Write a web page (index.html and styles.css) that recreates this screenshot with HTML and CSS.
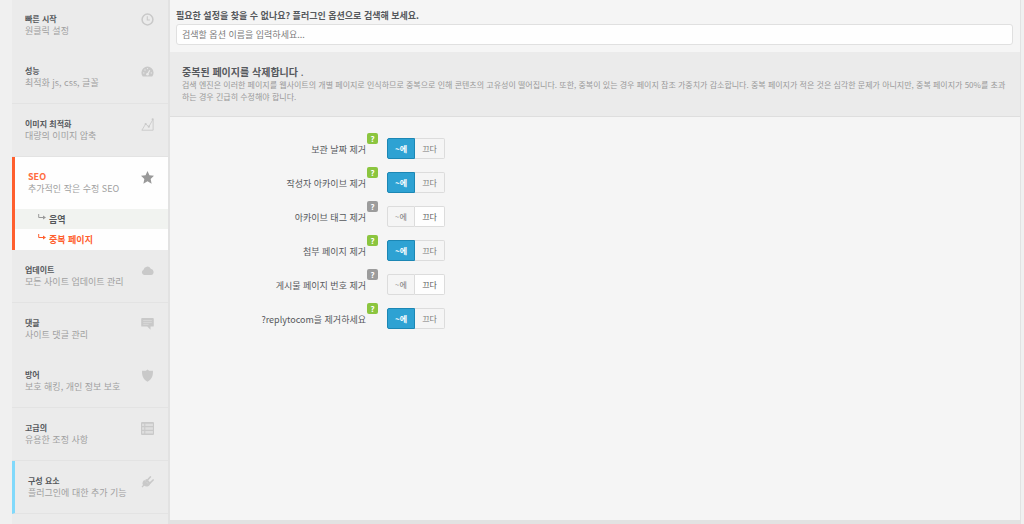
FILE: index.html
```html
<!DOCTYPE html>
<html lang="ko">
<head>
  <meta charset="UTF-8">
  <meta name="viewport" content="width=device-width, initial-scale=1.0">
  <title>중복 페이지</title>
  <link rel="stylesheet" href="styles.css">
</head>
<body>
  <div class="wrapper">
    <!-- Menu -->
    <nav class="sidebar">
      <a href="#" class="menu-item first">
        <span class="menu-text"><strong>빠른 시작</strong><span>원클릭 설정</span></span>
        <svg class="icon" viewBox="0 0 12 12"><circle cx="6" cy="6" r="5" fill="none" stroke="currentColor" stroke-width="1.4"/><path d="M5.8 3v3.4h2.4" fill="none" stroke="currentColor"/></svg>
      </a>
      <a href="#" class="menu-item line">
        <span class="menu-text"><strong>성능</strong><span>최적화 js, css, 글꼴</span></span>
        <svg class="icon" viewBox="0 0 12 12"><path d="M1.6 10.5A5.6 5.6 0 1 1 10.4 10.5Z" fill="currentColor"/><path d="M6 8.6 8.1 4.8" stroke="#ebebeb" stroke-width="1.1"/><circle cx="6" cy="8.6" r="1.2" fill="#ebebeb"/><circle cx="2.6" cy="7.3" r=".6" fill="#ebebeb"/><circle cx="3.7" cy="4.6" r=".6" fill="#ebebeb"/><circle cx="6" cy="3.3" r=".6" fill="#ebebeb"/><circle cx="9.5" cy="7.3" r=".6" fill="#ebebeb"/></svg>
      </a>
      <a href="#" class="menu-item line">
        <span class="menu-text"><strong>이미지 최적화</strong><span>대량의 이미지 압축</span></span>
        <svg class="icon" viewBox="0 0 12 12"><path d="M.8 11.3h10.4V2M.8 11.3 4.3 5.5l2.9 2.6 3.4-6" fill="none" stroke="currentColor" stroke-width=".8"/><circle cx="4.3" cy="5.5" r="1" fill="currentColor"/><circle cx="7.2" cy="8" r="1" fill="currentColor"/><circle cx="10.8" cy="1.3" r="1" fill="currentColor"/></svg>
      </a>

      <div class="menu-active">
        <a href="#" class="menu-item">
          <span class="menu-text"><strong>SEO</strong><span>추가적인 작은 수정 SEO</span></span>
          <svg class="icon" viewBox="0 0 12 12"><path d="M6 0 7.8 4l4.2.4-3.1 2.9.9 4.5L6 9.5l-3.8 2.3.9-4.5L0 4.4 4.2 4Z" fill="currentColor"/></svg>
        </a>
        <a href="#" class="sub-item">
          <svg class="arrow" viewBox="0 0 8 6"><path d="M.7 0v3.5h5" fill="none" stroke="currentColor"/><path d="M5 1.5 8 3.5 5 5.5Z" fill="currentColor"/></svg>
          음역
        </a>
        <a href="#" class="sub-item current">
          <svg class="arrow" viewBox="0 0 8 6"><path d="M.7 0v3.5h5" fill="none" stroke="currentColor"/><path d="M5 1.5 8 3.5 5 5.5Z" fill="currentColor"/></svg>
          중복 페이지
        </a>
      </div>

      <a href="#" class="menu-item line">
        <span class="menu-text"><strong>업데이트</strong><span>모든 사이트 업데이트 관리</span></span>
        <svg class="icon" viewBox="0 0 12 12"><path d="M2.8 10.2A2.6 2.6 0 0 1 2.3 5.3 3.6 3.6 0 0 1 9 4.3 3 3 0 0 1 9.3 10.2Z" fill="currentColor"/></svg>
      </a>
      <a href="#" class="menu-item">
        <span class="menu-text"><strong>댓글</strong><span>사이트 댓글 관리</span></span>
        <svg class="icon" viewBox="0 0 12 12"><path d="M1 1h10q.8 0 .8.8v6.2q0 .8-.8.8H8.8v3L5.8 8.8H1q-.8 0-.8-.8V1.8Q.2 1 1 1Z" fill="currentColor"/><path d="M2 3.2h8M2 5h8M2 6.8h5" stroke="#ebebeb" stroke-width=".4"/></svg>
      </a>
      <a href="#" class="menu-item line">
        <span class="menu-text"><strong>방어</strong><span>보호 해킹, 개인 정보 보호</span></span>
        <svg class="icon" viewBox="0 0 12 12"><path d="M6 .5 7.5 1.5H11C11.3 6 10 9.6 6 11.7 2 9.6.7 6 1 1.5H4.5Z" fill="currentColor"/></svg>
      </a>
      <a href="#" class="menu-item line">
        <span class="menu-text"><strong>고급의</strong><span>유용한 조정 사항</span></span>
        <svg class="icon" viewBox="0 0 12 12"><rect width="12" height="12" rx="1" fill="currentColor"/><path d="M1 2.600h2M1 6h2M1 9.400h2M4 2.600h7M4 6h7M4 9.400h7" stroke="#dedede" stroke-width="2.200"/></svg>
      </a>
      <a href="#" class="menu-item line components">
        <span class="menu-text"><strong>구성 요소</strong><span>플러그인에 대한 추가 기능</span></span>
        <svg class="icon" viewBox="0 0 12 12"><path d="M3 4.5 8 9.3C6.5 11 4.4 11 3 10L1.3 11.6.5 10.8 1.8 9.3C.9 7.6 1.5 5.7 3 4.5Z" fill="currentColor"/><path d="M5 5.8 8.6 1.8M7.5 8.2 11.2 4.6" stroke="currentColor" stroke-width="1.5" stroke-linecap="round"/><path d="M3.5 4.5 5.5 3.8 9 7.3 8 9.3Z" fill="currentColor"/></svg>
      </a>
    </nav>

    <!-- Options -->
    <main class="content">
      <div class="search">
        <label for="search-options">필요한 설정을 찾을 수 없나요? 플러그인 옵션으로 검색해 보세요.</label>
        <input type="text" id="search-options" placeholder="검색할 옵션 이름을 입력하세요...">
      </div>

      <header class="page-header">
        <h1>중복된 페이지를 삭제합니다 <span>.</span></h1>
        <p>검색 엔진은 이러한 페이지를 웹사이트의 개별 페이지로 인식하므로 중복으로 인해 콘텐츠의 고유성이 떨어집니다. 또한, 중복이 있는 경우 페이지 참조 가중치가 감소합니다. 중복 페이지가 적은 것은 심각한 문제가 아니지만, 중복 페이지가 50%를 초과하는 경우 긴급히 수정해야 합니다.</p>
      </header>

      <form class="options">
        <div class="option">
          <span class="option-label" id="opt-date">보관 날짜 제거</span>
          <button type="button" class="help green">?</button>
          <div class="switch" role="group" aria-labelledby="opt-date">
            <button type="button" class="on active">~에</button><button type="button" class="off">끄다</button>
          </div>
        </div>
        <div class="option">
          <span class="option-label" id="opt-author">작성자 아카이브 제거</span>
          <button type="button" class="help green">?</button>
          <div class="switch" role="group" aria-labelledby="opt-author">
            <button type="button" class="on active">~에</button><button type="button" class="off">끄다</button>
          </div>
        </div>
        <div class="option">
          <span class="option-label" id="opt-tag">아카이브 태그 제거</span>
          <button type="button" class="help">?</button>
          <div class="switch" role="group" aria-labelledby="opt-tag">
            <button type="button" class="on">~에</button><button type="button" class="off active">끄다</button>
          </div>
        </div>
        <div class="option">
          <span class="option-label" id="opt-attachment">첨부 페이지 제거</span>
          <button type="button" class="help green">?</button>
          <div class="switch" role="group" aria-labelledby="opt-attachment">
            <button type="button" class="on active">~에</button><button type="button" class="off">끄다</button>
          </div>
        </div>
        <div class="option">
          <span class="option-label" id="opt-number">게시물 페이지 번호 제거</span>
          <button type="button" class="help">?</button>
          <div class="switch" role="group" aria-labelledby="opt-number">
            <button type="button" class="on">~에</button><button type="button" class="off active">끄다</button>
          </div>
        </div>
        <div class="option">
          <span class="option-label" id="opt-reply">?replytocom을 제거하세요</span>
          <button type="button" class="help green">?</button>
          <div class="switch" role="group" aria-labelledby="opt-reply">
            <button type="button" class="on active">~에</button><button type="button" class="off">끄다</button>
          </div>
        </div>
      </form>
    </main>
  </div>

  <script>
    // Switch on / off
    document.querySelectorAll(".switch button").forEach((button) => {
      button.addEventListener("click", () => {
        button.parentElement.querySelector(".active").classList.remove("active");
        button.classList.add("active");
      });
    });
  </script>
</body>
</html>
```
FILE: styles.css
```css
* {
  box-sizing: border-box;
}

body {
  margin: 0;
  background: #f0f0f0;
  font-family: "Noto Sans CJK KR", sans-serif;
  font-size: 9px;
  color: #55585c;
}

button, input {
  font-family: inherit;
}

.wrapper {
  display: flex;
  height: 100vh;
  padding: 0 3px 0 12px;
  overflow: hidden;
}

/* Menu */
.sidebar {
  width: 156px;
  flex-shrink: 0;
  background: #ebebeb;
}

.menu-item {
  display: flex;
  justify-content: space-between;
  height: 52px;
  padding: 14px 14px 0 13px;
  color: #a0a0a0;
  text-decoration: none;
}

.menu-item.first {
  height: 51px;
  padding-top: 13px;
}

.menu-item.line {
  height: 53px;
  border-bottom: 1px solid #e3e3e3;
}

.menu-text {
  display: flex;
  flex-direction: column;
  line-height: 12px;
  white-space: nowrap;
}

.menu-text strong {
  font-size: 8px;
  color: #55585c;
}

.icon {
  width: 13px;
  height: 13px;
  flex-shrink: 0;
  color: #c9c9c9;
}

.menu-active {
  border-left: 3px solid #ff5f2e;
  background: #fefefe;
}

.menu-active strong {
  font-size: 9px;
  color: #ff6c40;
}

.menu-active .icon {
  color: #999;
}

.sub-item {
  display: flex;
  gap: 3px;
  height: 21px;
  padding-left: 23px;
  background: #fefefe;
  font-weight: bold;
  line-height: 21px;
  color: #55585c;
  text-decoration: none;
}

.sub-item:not(.current) {
  height: 20px;
  background: #f1f3f0;
}

.sub-item.current {
  color: #ff5f2e;
}

.arrow {
  width: 8px;
  height: 6px;
  margin-top: 5px;
  color: #999;
}

.current .arrow {
  color: #ff5f2e;
}

.components {
  border-left: 3px solid #81d9fb;
}

/* Content */
.content {
  flex: 1;
  border: solid #e2e2e2;
  border-width: 0 1px 4px 2px;
  background: #f5f5f5;
}

.search {
  display: flex;
  flex-direction: column;
  gap: 2px;
  padding: 9px 7px 7px 6px;
}

.search label {
  font-weight: bold;
  line-height: 13px;
}

.search input {
  height: 21px;
  padding: 0 5px;
  border: 1px solid #e0e0e0;
  border-radius: 3px;
  background: #fefefe;
  font-size: 9px;
}

.search input::placeholder {
  color: #7b7b7b;
}

.page-header {
  min-height: 65px;
  padding: 13px 12px 12px 12px;
  border-bottom: 1px solid #dedede;
  background: #ebebeb;
}

.page-header h1 {
  margin: 0;
  font-size: 10px;
  line-height: 14px;
}

.page-header h1 span {
  font-weight: normal;
}

.page-header p {
  margin: 0;
  font-size: 8px;
  line-height: 12px;
  color: #999;
}

.options {
  padding-top: 16px;
}

.option {
  display: flex;
  align-items: flex-start;
  height: 34px;
}

.option-label {
  width: 196px;
  padding-top: 10px;
  line-height: 14px;
  text-align: right;
}

.help {
  width: 11px;
  height: 11px;
  margin: 0 9px 0 1px;
  padding: 0;
  border: none;
  border-radius: 2px;
  background: #9c9c9c;
  font-size: 8px;
  font-weight: bold;
  line-height: 11px;
  color: #fff;
}

.help.green {
  background: #8bc53f;
}

.switch {
  display: flex;
  margin-top: 5px;
}

.switch button {
  height: 21px;
  padding: 0;
  border: 1px solid #dcdcdc;
  background: #f5f5f5;
  font-size: 8px;
  color: #777;
  cursor: pointer;
}

.switch .on {
  width: 28px;
  border-radius: 2px 0 0 2px;
}

.switch .off {
  width: 30px;
  border-left: none;
  border-radius: 0 2px 2px 0;
}

.switch .on.active {
  border-color: #1c87b4;
  background: #2ea2d3;
  font-weight: bold;
  color: #fff;
}

.switch .off.active {
  background: #fefefe;
  color: #555;
}
```
